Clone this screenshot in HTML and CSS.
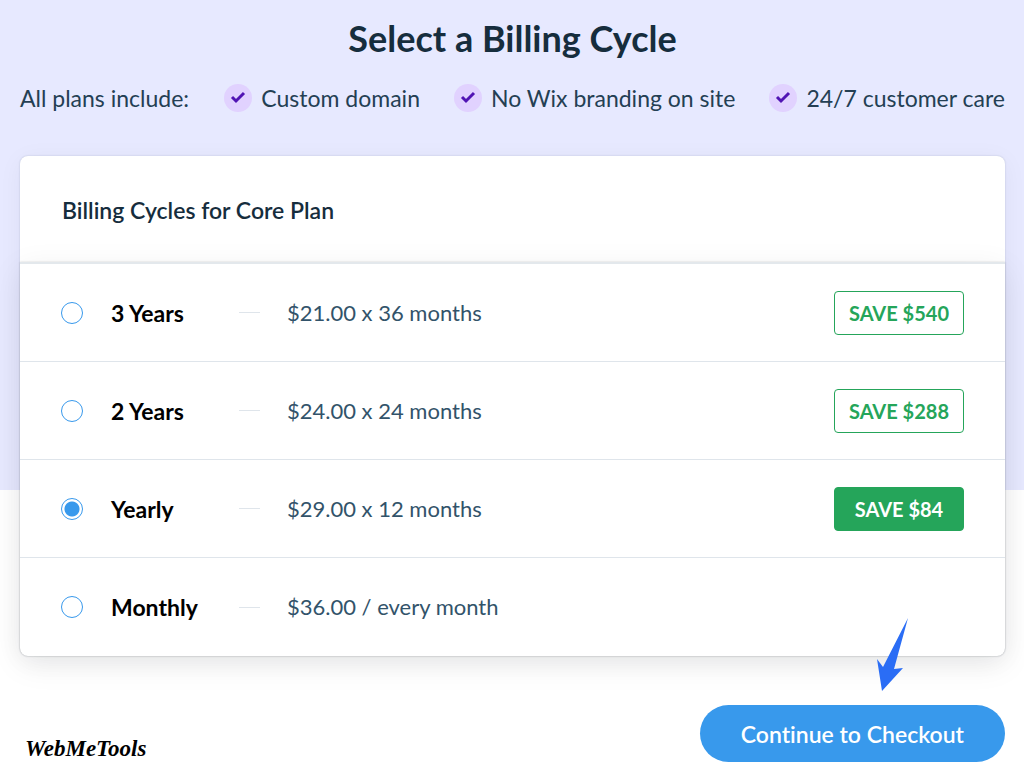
FILE: index.html
```html
<!DOCTYPE html>
<html lang="en">
<head>
  <meta charset="UTF-8">
  <meta name="viewport" content="width=device-width, initial-scale=1.0">
  <title>Select a Billing Cycle</title>
  <link rel="stylesheet" href="styles.css">
</head>
<body>
  <header>
    <h1>Select a Billing Cycle</h1>
    <div class="includes">
      <span>All plans include:</span>
      <ul>
        <li>
          <svg class="check" viewBox="0 0 28 28" aria-hidden="true"><circle cx="14" cy="14" r="14"/><path d="M8 13l4 4 8-8"/></svg>
          Custom domain
        </li>
        <li>
          <svg class="check" viewBox="0 0 28 28" aria-hidden="true"><circle cx="14" cy="14" r="14"/><path d="M8 13l4 4 8-8"/></svg>
          No Wix branding on site
        </li>
        <li>
          <svg class="check" viewBox="0 0 28 28" aria-hidden="true"><circle cx="14" cy="14" r="14"/><path d="M8 13l4 4 8-8"/></svg>
          24/7 customer care
        </li>
      </ul>
    </div>
  </header>
  <form>
    <main class="card">
      <h2 id="plan-title">Billing Cycles for Core Plan</h2>
      <div class="cycles" role="radiogroup" aria-labelledby="plan-title">
        <label class="cycle">
          <input type="radio" name="cycle" value="36">
          <span class="name">3 Years</span>
          <span class="dash"></span>
          <span class="price">$21.00 x 36 months</span>
          <span class="save">SAVE $540</span>
        </label>
        <label class="cycle">
          <input type="radio" name="cycle" value="24">
          <span class="name">2 Years</span>
          <span class="dash"></span>
          <span class="price">$24.00 x 24 months</span>
          <span class="save">SAVE $288</span>
        </label>
        <label class="cycle">
          <input type="radio" name="cycle" value="12" checked>
          <span class="name">Yearly</span>
          <span class="dash"></span>
          <span class="price">$29.00 x 12 months</span>
          <span class="save">SAVE $84</span>
        </label>
        <label class="cycle">
          <input type="radio" name="cycle" value="1">
          <span class="name">Monthly</span>
          <span class="dash"></span>
          <span class="price">$36.00 / every month</span>
        </label>
      </div>
    </main>
    <footer>
      <a class="brand" href="#">WebMeTools</a>
      <div class="checkout">
        <svg class="arrow" viewBox="0 0 32 74" aria-hidden="true"><path d="M32 0L18 51l9-1L6 73 1 41l6 8z"/></svg>
        <button type="submit">Continue to Checkout</button>
      </div>
    </footer>
  </form>
</body>
</html>
```

FILE: styles.css
```css
* {
  box-sizing: border-box;
}
body {
  font-family: Lato, "Liberation Sans", sans-serif;
  font-size: 23px;
  font-variant-ligatures: none;
  line-height: 28px;
  color: #32536a;
  margin: 0;
  padding: 16px 19px 10px 20px;
  background: #fff linear-gradient(#e7e9ff, #e7e9ff) no-repeat 0 0 / 100% 490px;
}
h1 {
  margin: 0;
  color: #162d3d;
  font-size: 36px;
  line-height: 44px;
  text-align: center;
}
.includes {
  display: flex;
  justify-content: space-between;
  margin-top: 24px;
  white-space: nowrap;
  color: #243f54;
}
.includes ul {
  display: flex;
  gap: 34px;
  margin: 0;
  padding: 0;
  list-style: none;
}
.includes li {
  display: flex;
  align-items: center;
  gap: 9px;
}
.check {
  width: 28px;
  height: 28px;
  fill: #e1d2ff;
}
.check path {
  fill: none;
  stroke: #5114b4;
  stroke-width: 3;
}
.card {
  margin-top: 44px;
  border-radius: 8px;
  background: #fff;
  box-shadow: 0 0 2px rgba(22, 45, 61, 0.2), 0 4px 24px rgba(22, 45, 61, 0.05);
}
h2 {
  margin: 0;
  padding: 40px 42px 38px;
  color: #162d3d;
  font-size: 23px;
  line-height: 28px;
  font-weight: 600;
}
.cycles {
  border-radius: 0 0 8px 8px;
  box-shadow: 0 0 2px rgba(0, 0, 0, 0.2), 0 8px 32px rgba(0, 0, 0, 0.08);
}
.cycle {
  display: flex;
  align-items: center;
  height: 98px;
  padding: 0 41px;
  border-top: 1px solid #dfe5eb;
  cursor: pointer;
}
.cycle:first-child,
.cycle:last-child {
  height: 99px;
}
.cycle:first-child {
  border-top: 2px solid #e3e8ec;
}
.cycle input {
  appearance: none;
  width: 22px;
  height: 22px;
  margin: 0 28px 0 0;
  border: 1px solid #3899ec;
  border-radius: 50%;
}
.cycle input:checked {
  background: radial-gradient(circle, #3899ec 7px, #fff 8px);
}
.name {
  width: 128px;
  color: #000;
  font-weight: 700;
}
.dash {
  width: 21px;
  height: 1px;
  margin-right: 27px;
  background: #dfe5eb;
}
.price {
  font-size: 22px;
}
.save {
  width: 130px;
  margin-left: auto;
  padding: 7px 0;
  border: 1px solid #25a55a;
  border-radius: 4px;
  color: #25a55a;
  font-size: 20px;
  font-weight: 700;
  text-align: center;
}
.cycle input:checked ~ .save {
  background: #25a55a;
  color: #fff;
}
footer {
  display: flex;
  justify-content: space-between;
  margin-top: 49px;
}
.brand {
  margin: 30px 0 0 5px;
  color: #000;
  font-family: "Liberation Serif", serif;
  font-size: 23px;
  font-style: italic;
  font-weight: 700;
  text-decoration: none;
}
.checkout {
  position: relative;
}
.arrow {
  position: absolute;
  top: -87px;
  right: 97px;
  width: 32px;
  height: 74px;
  fill: #2a6df5;
}
button {
  height: 57px;
  padding: 0 41px;
  border: 0;
  border-radius: 29px;
  background: #3899ec;
  color: #fff;
  font: inherit;
  font-weight: 600;
  cursor: pointer;
}
button:hover {
  background: #4eb7f5;
}
```
